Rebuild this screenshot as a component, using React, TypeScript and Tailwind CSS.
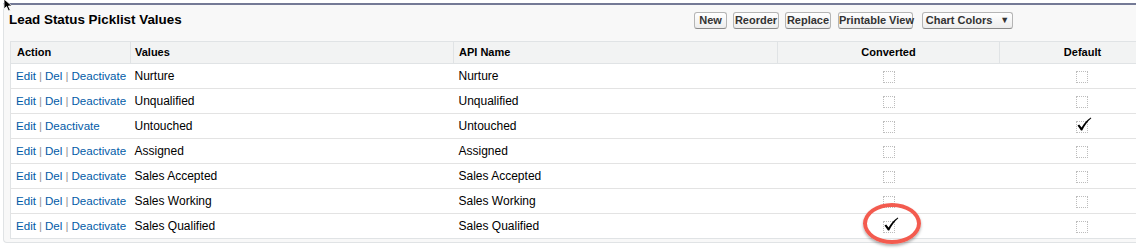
import React from "react";

type Row = {
  label: string;
  canDelete: boolean;
  converted: boolean;
  isDefault: boolean;
};

const rows: Row[] = [
  { label: "Nurture", canDelete: true, converted: false, isDefault: false },
  { label: "Unqualified", canDelete: true, converted: false, isDefault: false },
  { label: "Untouched", canDelete: false, converted: false, isDefault: true },
  { label: "Assigned", canDelete: true, converted: false, isDefault: false },
  { label: "Sales Accepted", canDelete: true, converted: false, isDefault: false },
  { label: "Sales Working", canDelete: true, converted: false, isDefault: false },
  { label: "Sales Qualified", canDelete: true, converted: true, isDefault: false },
];

// Salesforce-style read-only checkbox: dotted square, with a check drawn on top when set
function CheckImg({ checked }: { checked: boolean }) {
  return (
    <span className="relative inline-block w-[12px] h-[12px] border border-dotted border-[#bdbdbd] align-middle">
      {checked && (
        <svg
          width="16"
          height="15"
          viewBox="0 0 16 15"
          className="absolute left-[-1px] top-[-5px]"
        >
          <path
            d="M1.5 8.5 L3.2 7.4 L5.6 10.6 C8 6.4 11 3 14.8 0.6 L15.3 1.2 C11.6 4.4 8.6 8.4 6.2 13.6 L5 13.6 Z"
            fill="#000"
          />
        </svg>
      )}
    </span>
  );
}

const btnBase =
  "h-[17px] px-0 whitespace-nowrap rounded-[3px] border border-[#b5b5b5] border-b-[#8a8a8a] bg-gradient-to-b from-white to-[#ededed] text-[11px] font-bold text-[#333] leading-none";

function Sep() {
  return <span className="text-[#999] px-[3px]">|</span>;
}

export default function App() {
  return (
    <div
      className="relative w-[1136px] h-[251px] overflow-hidden bg-white"
      style={{ fontFamily: '"Liberation Sans", Arial, sans-serif' }}
    >
      {/* Panel */}
      <div className="ml-[3px] mt-[3px] w-[1180px] h-[240px] bg-[#f8f8f8] border-t-2 border-t-[#747a96] border-l border-l-[#e0e3e5] border-b border-b-[#e0e3e5] rounded-bl-[4px]">
        {/* Title bar */}
        <div className="flex items-center h-[30px]">
          <h3 className="w-[690px] pl-[5px] text-[13.4px] font-bold text-black">
            Lead Status Picklist Values
          </h3>
          <div className="flex items-center">
            <button className={`${btnBase} w-[33px]`}>New</button>
            <button className={`${btnBase} w-[46px] ml-[6px]`}>Reorder</button>
            <button className={`${btnBase} w-[46px] ml-[6px]`}>Replace</button>
            <button className={`${btnBase} w-[75px] ml-[7px]`}>Printable View</button>
            <button className={`${btnBase} w-[91px] ml-[9px] flex items-center justify-center gap-[8px]`}>
              Chart Colors
              <span className="text-[9px]">▼</span>
            </button>
          </div>
        </div>

        {/* Table */}
        <div className="ml-[6px] mt-[6px]">
          <table className="border-collapse bg-white border border-[#e0e3e5] text-[12px] text-black">
            <colgroup>
              <col className="w-[120px]" />
              <col className="w-[323px]" />
              <col className="w-[324px]" />
              <col className="w-[222px]" />
              <col className="w-[166px]" />
            </colgroup>
            <thead>
              <tr className="h-[22px] bg-[#f2f3f3] text-[11px] font-bold">
                <th className="text-left pl-[6px] border-r border-[#e0e3e5] border-b border-b-[#e0e3e5]">
                  Action
                </th>
                <th className="text-left pl-[4px] border-r border-[#e0e3e5] border-b border-b-[#e0e3e5]">
                  Values
                </th>
                <th className="text-left pl-[5px] border-r border-[#e0e3e5] border-b border-b-[#e0e3e5]">
                  API Name
                </th>
                <th className="text-center border-r border-[#e0e3e5] border-b border-b-[#e0e3e5]">
                  Converted
                </th>
                <th className="text-center border-b border-b-[#e0e3e5]">Default</th>
              </tr>
            </thead>
            <tbody>
              {rows.map((r, i) => (
                <tr
                  key={r.label}
                  className={
                    i < rows.length - 1
                      ? "h-[25px] border-b border-[#e3e3e3]"
                      : "h-[25px]"
                  }
                >
                  <td className="pl-[5px] whitespace-nowrap text-[11.6px] text-[#015ba7]">
                    <a>Edit</a>
                    <Sep />
                    {r.canDelete && (
                      <>
                        <a>Del</a>
                        <Sep />
                      </>
                    )}
                    <a>Deactivate</a>
                  </td>
                  <td className="pl-[4px]">{r.label}</td>
                  <td className="pl-[5px]">{r.label}</td>
                  <td className="text-center">
                    <CheckImg checked={r.converted} />
                  </td>
                  <td className="text-center">
                    <CheckImg checked={r.isDefault} />
                  </td>
                </tr>
              ))}
            </tbody>
          </table>
        </div>
      </div>

      {/* Red annotation ring around the converted check */}
      <div className="absolute left-[863px] top-[203px] w-[58px] h-[41px] rounded-[50%] border-[4px] border-[#f35b4f] shadow-[0_2px_3px_rgba(0,0,0,0.3)]" />

      {/* Mouse pointer */}
      <svg className="absolute left-[3px] top-[-2px]" width="12" height="14" viewBox="0 0 12 14">
        <path d="M1 1 L1 11 L3.5 8.6 L5.5 13 L7.3 12.2 L5.4 8 L9 8 Z" fill="#000" stroke="#fff" strokeWidth="0.8" />
      </svg>
    </div>
  );
}
